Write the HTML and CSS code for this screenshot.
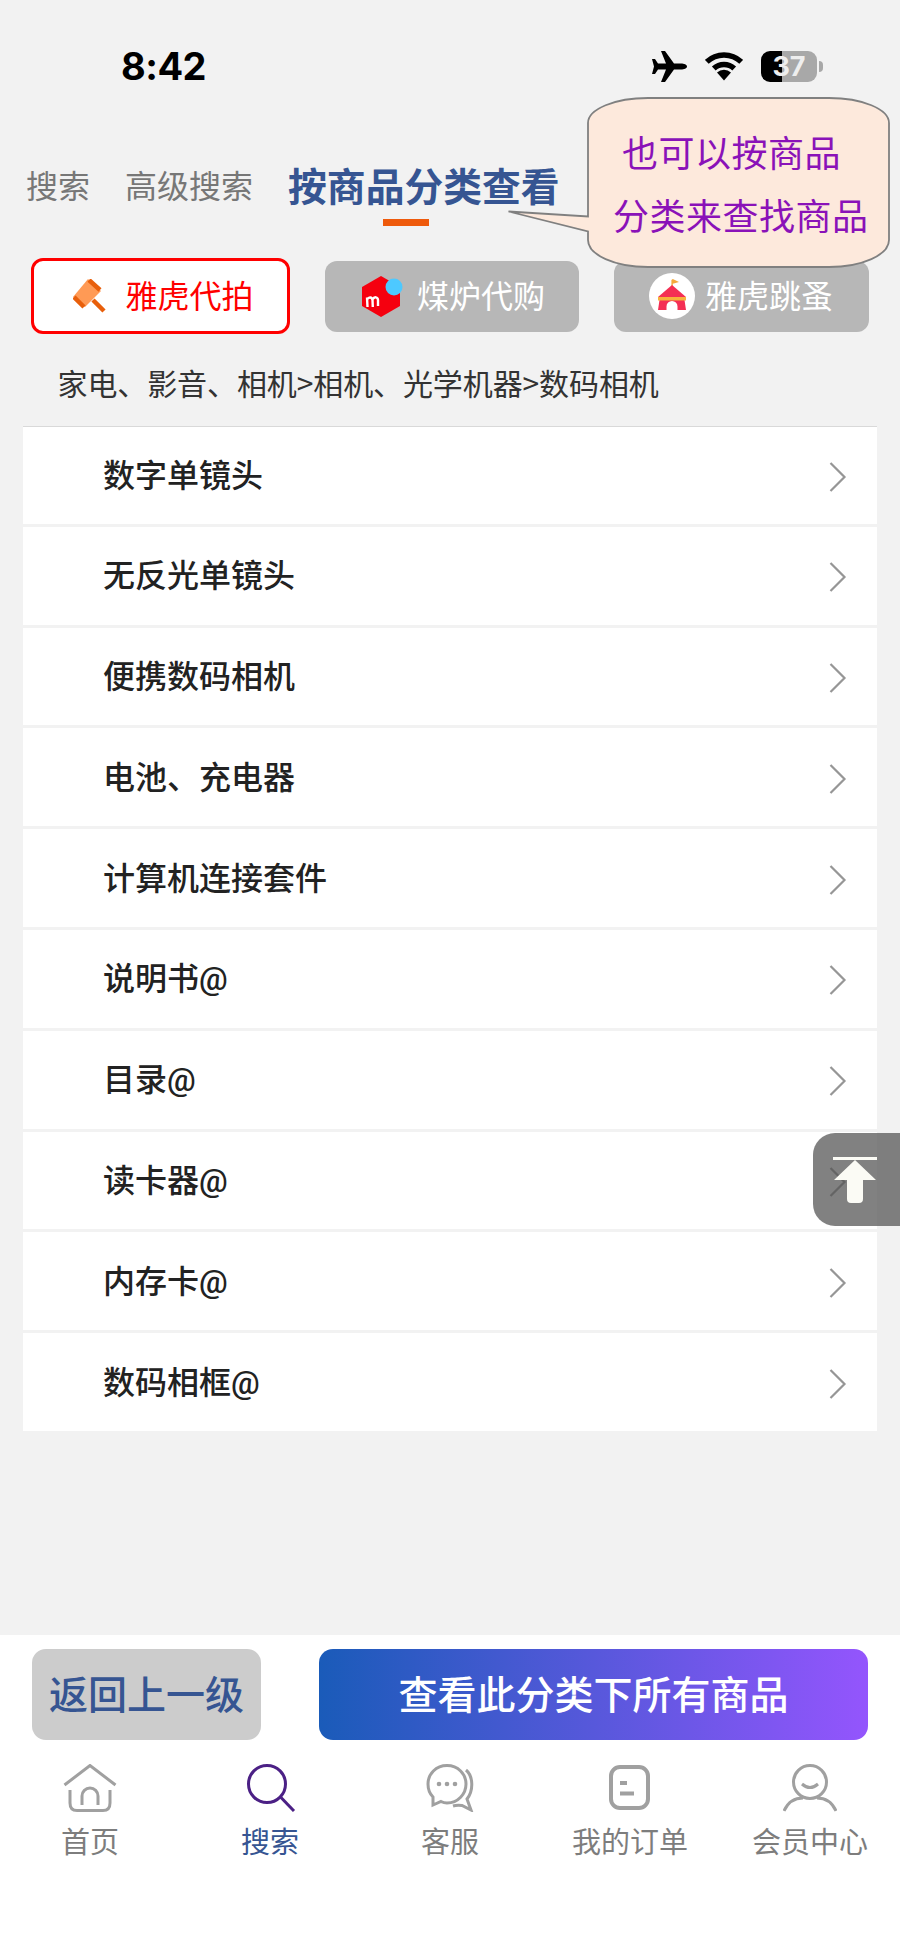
FILE: index.html
```html
<!DOCTYPE html>
<html lang="zh-CN">
<head>
<meta charset="utf-8">
<title>按商品分类查看</title>
<link rel="stylesheet" href="styles.css">
</head>
<body>
<div class="page">
  <header class="status">
    <div class="time">8:42</div>
    <div class="status-icons">
      <svg class="ic-plane" viewBox="0 0 35 31"><path d="M35 15.5C35 13.5 32 12.5 29 12.5L22 12.5L13 0L9 0L14 12.5L6 12.5L3 8L0 8L2 15.5L0 23L3 23L6 18.5L14 18.5L9 31L13 31L22 18.5L29 18.5C32 18.5 35 17.5 35 15.5Z"/></svg>
      <svg class="ic-wifi" viewBox="0 0 38 29"><path class="wifi-arc" d="M1.8 9.8A25 25 0 0 1 36.2 9.8M8.8 16.6A15 15 0 0 1 29.2 16.6"/><path d="M19 28.5L12 20.5A10.5 10.5 0 0 1 26 20.5Z"/></svg>
      <div class="battery">37</div>
    </div>
  </header>

  <nav class="tabs">
    <span class="tab">搜索</span>
    <span class="tab tab-second">高级搜索</span>
    <span class="tab tab-active">按商品分类查看</span>
  </nav>

  <div class="platforms">
    <div class="platform platform-on">
      <svg class="ic-gavel" viewBox="0 0 34 34">
        <path class="gavel-light" d="M15 0L28 12L12 28L0 18Z"/>
        <path class="gavel-dark" d="M16 1L27 11M1 18L11 28M20 21L31 32"/>
      </svg>
      <span>雅虎代拍</span>
    </div>
    <div class="platform platform-mercari">
      <svg class="ic-mercari" viewBox="0 0 41 41">
        <path class="merc-box" d="M19 0L38 11L38 30L19 41L0 30L0 11Z"/>
        <circle class="merc-dot" cx="32" cy="11" r="8.5"/>
        <path class="merc-m" d="M5 21.5L5.5 31M5 23.5C7 20.5 10 21 10.5 24L10.8 31M10.5 23.5C12.5 20 15.8 21 16 24L16 30"/>
      </svg>
      <span>煤炉代购</span>
    </div>
    <div class="platform platform-flea">
      <svg class="ic-tent" viewBox="0 0 46 46">
        <circle class="tent-bg" cx="23" cy="23" r="23"/>
        <path class="tent-flag" d="M22.4 7L22.4 13L23.8 13L23.8 10.8L30 9L23.8 6Z"/>
        <path class="tent-red" d="M23 12L37 24L9 24Z"/>
        <path class="tent-red" d="M10.5 27L35.5 27L37 37L28.500 37L28.500 33.500A5.500 5.500 0 0 0 17.500 33.500L17.500 37L9 37Z"/>
        <path class="tent-band" d="M9 24L37 24L37 27.500L9 27.500Z"/>
      </svg>
      <span>雅虎跳蚤</span>
    </div>
  </div>

  <div class="crumb">家电、影音、相机&gt;相机、光学机器&gt;数码相机</div>

  <ul class="list">
    <li class="row"><span>数字单镜头</span><svg class="chev" viewBox="0 0 18 30"><path d="M1.500 1L15.500 15L1.500 29"/></svg></li>
    <li class="row"><span>无反光单镜头</span><svg class="chev" viewBox="0 0 18 30"><path d="M1.500 1L15.500 15L1.500 29"/></svg></li>
    <li class="row"><span>便携数码相机</span><svg class="chev" viewBox="0 0 18 30"><path d="M1.500 1L15.500 15L1.500 29"/></svg></li>
    <li class="row"><span>电池、充电器</span><svg class="chev" viewBox="0 0 18 30"><path d="M1.500 1L15.500 15L1.500 29"/></svg></li>
    <li class="row"><span>计算机连接套件</span><svg class="chev" viewBox="0 0 18 30"><path d="M1.500 1L15.500 15L1.500 29"/></svg></li>
    <li class="row"><span>说明书@</span><svg class="chev" viewBox="0 0 18 30"><path d="M1.500 1L15.500 15L1.500 29"/></svg></li>
    <li class="row"><span>目录@</span><svg class="chev" viewBox="0 0 18 30"><path d="M1.500 1L15.500 15L1.500 29"/></svg></li>
    <li class="row"><span>读卡器@</span><svg class="chev" viewBox="0 0 18 30"><path d="M1.500 1L15.500 15L1.500 29"/></svg></li>
    <li class="row"><span>内存卡@</span><svg class="chev" viewBox="0 0 18 30"><path d="M1.500 1L15.500 15L1.500 29"/></svg></li>
    <li class="row"><span>数码相框@</span><svg class="chev" viewBox="0 0 18 30"><path d="M1.500 1L15.500 15L1.500 29"/></svg></li>
  </ul>

  <footer class="bottom">
    <div class="actions">
      <button class="btn-back">返回上一级</button>
      <button class="btn-all">查看此分类下所有商品</button>
    </div>
    <div class="tabbar">
      <div class="tabitem">
        <svg class="nav-ic" viewBox="0 0 54 48"><path d="M1.500 21L27 1.500L52.500 21"/><path d="M7 26L7 39Q7 46.500 14 46.500L40 46.500Q47 46.500 47 39L47 26"/><path d="M19 41L19 32A8 8 0 0 1 35 32L35 41"/></svg>
        <span>首页</span>
      </div>
      <div class="tabitem tabitem-on">
        <svg class="nav-ic" viewBox="0 0 54 48"><circle cx="24" cy="20" r="18.500"/><path d="M38 33.500L51 47"/></svg>
        <span>搜索</span>
      </div>
      <div class="tabitem">
        <svg class="nav-ic" viewBox="0 0 54 48"><path d="M24 1.500C13 1.500 5 10 5 20C5 26 7 30 10 33L10 41L18 37.500C20 38.500 22 39 24 39C35 39 43 30 43 20C43 10 35 1.500 24 1.500Z"/><path d="M43 6C50 12 51 26 44 35L48 46L39 41.500C36 41 33 41 30 42"/><circle class="dot" cx="16" cy="20" r="2.300"/><circle class="dot" cx="24" cy="20" r="2.300"/><circle class="dot" cx="32" cy="20" r="2.300"/></svg>
        <span>客服</span>
      </div>
      <div class="tabitem">
        <svg class="nav-ic nav-order" viewBox="0 0 54 48"><rect x="8" y="3" width="37" height="41" rx="9"/><path d="M17 19L24 19M17 29.500L31 29.500"/></svg>
        <span>我的订单</span>
      </div>
      <div class="tabitem">
        <svg class="nav-ic" viewBox="0 0 54 48"><circle cx="27" cy="18" r="16.500"/><path d="M19 20Q27 27 35 20"/><path d="M1 47C5 38 12 34 20 34M34 34C42 34 49 38 53 47" /></svg>
        <span>会员中心</span>
      </div>
    </div>
  </footer>

  <aside class="bubble">
    <svg class="bubble-shape" viewBox="0 0 383 171"><path d="M81 119.500L81 26C81 12 108 1 141 1L322 1C355 1 382 12 382 26L382 143C382 158 355 170 322 170L141 170C108 170 81 158 81 143L81 134.500L1.500 114.500Z"/></svg>
    <div class="bubble-text">
      <p class="line-a">也可以按商品</p>
      <p class="line-b">分类来查找商品</p>
    </div>
  </aside>

  <button class="to-top" aria-label="top">
    <svg class="to-top-ic" viewBox="0 0 44 46"><path d="M0 1.500L44 1.500" class="to-top-bar"/><path d="M22 3L43 23L30 23L30 42Q30 46 26 46L18 46Q14 46 14 42L14 23L1 23Z"/></svg>
  </button>
</div>
</body>
</html>
```

FILE: styles.css
```css
* { box-sizing: border-box; }
html, body { margin: 0; padding: 0; }
body {
  font-family: "Noto Sans CJK SC", "Noto Sans", sans-serif;
  background: #f2f2f2;
}
.page {
  position: relative;
  width: 900px;
  height: 1951px;
  display: flex;
  flex-direction: column;
  background: #f2f2f2;
  overflow: hidden;
}

/* status bar */
.status {
  height: 134px;
  padding: 44px 83px 0 121px;
  display: flex;
  justify-content: space-between;
  align-items: flex-start;
}
.time {
  font-family: Inter, sans-serif;
  font-weight: 700;
  font-size: 38px;
  line-height: 44px;
  color: #000;
  letter-spacing: -0.5px;
}
.status-icons {
  display: flex;
  align-items: center;
  margin-top: 7px;
}
.ic-plane { width: 35px; height: 31px; fill: #000; margin-right: 18px; }
.ic-wifi { width: 38px; height: 29px; fill: #000; margin-right: 18px; }
.wifi-arc { fill: none; stroke: #000; stroke-width: 5.5px; }
.battery {
  position: relative;
  width: 56px;
  height: 31px;
  border-radius: 9px;
  background: linear-gradient(to right, #000 37%, #a8a8a8 37%);
  color: #eee;
  font-family: Inter, sans-serif;
  font-weight: 700;
  font-size: 27px;
  line-height: 31px;
  text-align: center;
}
.battery::after {
  content: "";
  position: absolute;
  left: 58px;
  top: 10px;
  width: 4px;
  height: 11px;
  border-radius: 0 4px 4px 0;
  background: #a8a8a8;
}

/* tabs */
.tabs {
  height: 125px;
  padding-left: 26px;
  display: flex;
  align-items: flex-start;
}
.tab {
  font-size: 32px;
  line-height: 46px;
  margin-top: 26.500px;
  color: #777;
}
.tab-second { margin-left: 35px; }
.tab-active {
  position: relative;
  margin-left: 35px;
  margin-top: 22.500px;
  font-size: 38.800px;
  line-height: 54px;
  font-weight: 700;
  color: #365592;
}
.tab-active::after {
  content: "";
  position: absolute;
  left: 95px;
  top: 62.500px;
  width: 46px;
  height: 7px;
  background: #ee5a0c;
}

/* platform switch */
.platforms {
  height: 74px;
  display: flex;
  align-items: center;
  padding-left: 31px;
}
.platform {
  height: 71px;
  width: 255px;
  margin-left: 35px;
  border-radius: 12px;
  background: #b7b7b7;
  display: flex;
  align-items: center;
  color: #fff;
  font-size: 32px;
}
.platform span { margin-top: -5px; }
.platform-on {
  width: 259px;
  height: 76px;
  margin-left: 0;
  border: 3px solid #f00;
  background: #fff;
  color: #f00;
  padding-left: 39px;
}
.platform-mercari { width: 254px; margin-left: 35px; padding-left: 37px; }
.platform-flea { margin-left: 35px; padding-left: 35px; }
.ic-gavel { width: 34px; height: 34px; margin-right: 18.500px; flex: none; }
.gavel-light { fill: #ff9a55; }
.gavel-dark { fill: none; stroke: #e85f0b; stroke-width: 4.500px; }
.ic-mercari { width: 41px; height: 41px; margin-right: 14px; flex: none; }
.merc-box { fill: #f5000f; }
.merc-dot { fill: #4dc9ff; }
.merc-m { fill: none; stroke: #fff; stroke-width: 2.400px; }
.ic-tent { width: 46px; height: 46px; margin-right: 10px; flex: none; }
.tent-bg { fill: #fff; }
.tent-flag { fill: #f5a93b; }
.tent-red { fill: #f42f54; }
.tent-band { fill: #f7b13c; }

/* breadcrumb */
.crumb {
  height: 93px;
  padding: 5px 0 0 57.500px;
  display: flex;
  align-items: center;
  font-size: 30px;
  letter-spacing: -0.100px;
  color: #333;
}

/* list */
.list {
  list-style: none;
  margin: 0 23px;
  padding: 0;
  display: flex;
  flex-direction: column;
  gap: 3px;
}
.row {
  height: 97.800px;
  padding: 0 30px 0 80px;
  background: #fff;
  display: flex;
  align-items: center;
  justify-content: space-between;
  font-family: Roboto, "Noto Sans CJK SC", sans-serif;
  font-size: 32px;
  font-weight: 500;
  color: #222;
}
.row:first-child { border-top: 1.500px solid #d9d9d9; }
.row span { margin-top: -5px; }
.chev { width: 18px; height: 30px; margin-top: 3px; fill: none; stroke: #969696; stroke-width: 2.200px; }

/* bottom */
.bottom {
  margin-top: auto;
  height: 316px;
  background: #fff;
  padding-top: 14px;
}
.actions {
  display: flex;
  padding: 0 32px;
  justify-content: space-between;
}
.btn-back, .btn-all {
  height: 91px;
  border: 0;
  border-radius: 14px;
  font-family: inherit;
  font-size: 39px;
  font-weight: 500;
  padding: 0 0 5px;
}
.btn-back { width: 229px; background: #cccccc; color: #365592; }
.btn-all {
  width: 549px;
  background: linear-gradient(to right, #1a5bb9, #9455fd);
  color: #fff;
}
.tabbar {
  display: grid;
  grid-template-columns: repeat(5, 180px);
  margin-top: 24px;
}
.tabitem {
  display: flex;
  flex-direction: column;
  align-items: center;
  font-size: 29px;
  line-height: 40px;
  color: #7d7d7d;
}
.tabitem span { margin-top: 8px; white-space: nowrap; }
.nav-ic {
  width: 54px;
  height: 48px;
  fill: none;
  stroke: #a0a0a0;
  stroke-width: 3px;
}
.nav-order { stroke-width: 4px; }
.dot { fill: #a0a0a0; stroke: none; }
.tabitem-on { color: #365592; }
.tabitem-on .nav-ic { stroke: #4b2085; }

/* overlays */
.bubble {
  position: absolute;
  left: 507px;
  top: 97px;
  width: 383px;
  height: 171px;
}
.bubble-shape {
  display: block;
  width: 383px;
  height: 171px;
  fill: #fde9dc;
  stroke: #808080;
  stroke-width: 1.800px;
}
.bubble-text {
  position: absolute;
  inset: 0;
  color: #8a12b8;
  font-size: 36px;
  line-height: 64px;
}
.bubble-text p { margin: 0; white-space: nowrap; }
.line-a { padding: 22px 0 0 115px; letter-spacing: 0.500px; }
.line-b { margin-top: -1px !important; padding-left: 106px; letter-spacing: 0.500px; }
.to-top {
  position: absolute;
  left: 813px;
  top: 1133px;
  width: 87px;
  height: 93px;
  border: 0;
  padding: 0 0 0 20px;
  border-radius: 22px 0 0 22px;
  background: rgba(80, 80, 80, 0.72);
  display: flex;
  align-items: center;
}
.to-top-ic { width: 44px; height: 46px; fill: #fbfbf5; }
.to-top-bar { stroke: #fbfbf5; stroke-width: 3px; }
```
